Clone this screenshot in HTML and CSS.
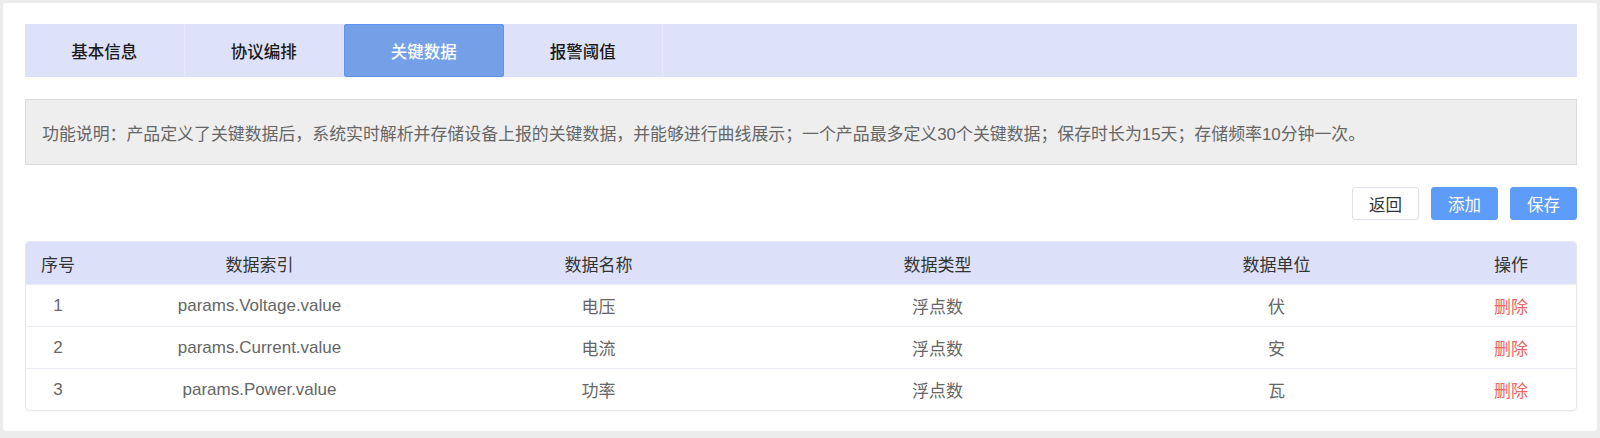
FILE: index.html
```html
<!DOCTYPE html>
<html lang="zh-CN">
<head>
<meta charset="utf-8">
<title>关键数据</title>
<link rel="stylesheet" href="styles.css">
</head>
<body>
<div class="card">
  <div class="tabs">
    <div class="tab">基本信息</div>
    <div class="tab">协议编排</div>
    <div class="tab active">关键数据</div>
    <div class="tab">报警阈值</div>
  </div>
  <div class="notice">功能说明：产品定义了关键数据后，系统实时解析并存储设备上报的关键数据，并能够进行曲线展示；一个产品最多定义30个关键数据；保存时长为15天；存储频率10分钟一次。</div>
  <div class="actions">
    <button class="btn">返回</button>
    <button class="btn primary">添加</button>
    <button class="btn primary">保存</button>
  </div>
  <div class="table">
    <div class="row head">
      <div class="c c1">序号</div>
      <div class="c">数据索引</div>
      <div class="c">数据名称</div>
      <div class="c">数据类型</div>
      <div class="c">数据单位</div>
      <div class="c c6">操作</div>
    </div>
    <div class="row">
      <div class="c c1">1</div>
      <div class="c">params.Voltage.value</div>
      <div class="c">电压</div>
      <div class="c">浮点数</div>
      <div class="c">伏</div>
      <div class="c c6"><span class="del">删除</span></div>
    </div>
    <div class="row">
      <div class="c c1">2</div>
      <div class="c">params.Current.value</div>
      <div class="c">电流</div>
      <div class="c">浮点数</div>
      <div class="c">安</div>
      <div class="c c6"><span class="del">删除</span></div>
    </div>
    <div class="row">
      <div class="c c1">3</div>
      <div class="c">params.Power.value</div>
      <div class="c">功率</div>
      <div class="c">浮点数</div>
      <div class="c">瓦</div>
      <div class="c c6"><span class="del">删除</span></div>
    </div>
  </div>
</div>
</body>
</html>
```

FILE: styles.css
```css
* { box-sizing: border-box; }
html, body {
  margin: 0;
  padding: 0;
  background: #ececec;
}
body {
  padding: 3px 3px 0 3px;
  font-family: "Liberation Sans", "Noto Sans CJK SC", sans-serif;
  font-size: 17px;
  color: #666;
}
.card {
  background: #fff;
  border-radius: 4px;
  padding: 21px 20px 21px 22px;
  height: 428px;
}
.tabs {
  display: flex;
  height: 53px;
  background: #dde2fa;
}
.tab {
  flex: 0 0 159.5px;
  display: flex;
  align-items: center;
  justify-content: center;
  border-right: 1px solid #e6e9fb;
  font-family: "Noto Sans CJK SC", sans-serif;
  font-size: 16.5px;
  font-weight: 500;
  color: #1a1a1a;
}
.tab.active {
  background: #74a0e8;
  border: 1px solid #5a94ee;
  border-radius: 2px;
  color: #fff;
}
.notice {
  margin-top: 22px;
  height: 66px;
  background: #eeeeee;
  border: 1px solid #dcdcdc;
  display: flex;
  align-items: center;
  padding-left: 16px;
  color: #666;
  font-size: 16.9px;
}
.actions {
  margin-top: 22px;
  display: flex;
  justify-content: flex-end;
  gap: 12px;
}
.btn {
  width: 67px;
  height: 33px;
  border: 1px solid #dcdfe6;
  border-radius: 3px;
  background: #fff;
  color: #333;
  font-family: inherit;
  font-size: 16.5px;
  padding: 0;
}
.btn.primary {
  background: #5d9cf8;
  border-color: #5d9cf8;
  color: #fff;
}
.table {
  margin-top: 21px;
  border: 1px solid #e6e8ee;
  border-radius: 4px;
  overflow: hidden;
  box-shadow: 0 1px 2px rgba(0,0,0,0.04);
}
.row {
  display: flex;
  height: 42px;
  border-top: 1px solid #ebeef5;
}
.row.head {
  border-top: none;
  height: 42px;
  background: #dce1f9;
  color: #333;
}
.c {
  flex: 1 1 0;
  display: flex;
  align-items: center;
  justify-content: center;
  white-space: nowrap;
}
.c1 { flex: 0 0 64px; }
.c6 { flex: 0 0 130px; }
.del { color: #ee6565; }
```
